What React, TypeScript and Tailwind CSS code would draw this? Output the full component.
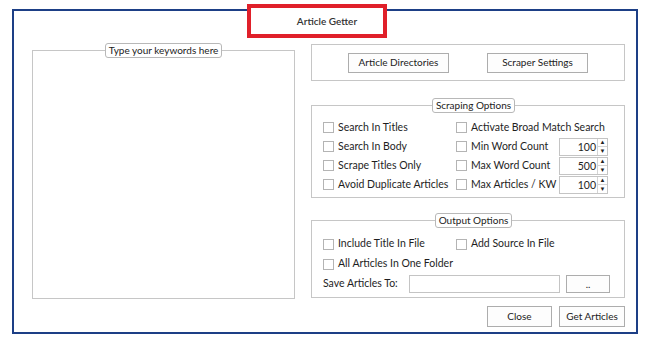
import React from 'react';

const Check = ({ label }: { label: string }) => (
    <label className="flex items-center gap-[4px] whitespace-nowrap">
        <span className="w-[11px] h-[11px] border border-[#b4b4b4] bg-white shrink-0" />
        <span>{label}</span>
    </label>
);

const Spin = ({ value }: { value: string }) => (
    <div className="flex h-[18px] w-[49px] border border-[#c4c4c4] bg-white">
        <span className="flex-1 text-right pr-[1px] leading-[16px]">{value}</span>
        <div className="flex flex-col w-[10px] border-l border-[#d4d4d4]">
            <span className="flex-1 flex items-center justify-center text-[6px] leading-none text-[#222]">▲</span>
            <span className="flex-1 flex items-center justify-center text-[6px] leading-none text-[#222] border-t border-[#d4d4d4]">▼</span>
        </div>
    </div>
);

const Legend = ({ children }: { children: React.ReactNode }) => (
    <legend className="mx-auto px-[3px] h-[15px] leading-[13px] text-[10px] border border-[#b8b8b8] rounded-[3px] bg-white text-[#222]">
        {children}
    </legend>
);

const Button = ({ children, className }: { children: React.ReactNode; className: string }) => (
    <button className={`border border-[#adadad] bg-[#fdfdfd] text-[#222] text-[10px] ${className}`}>{children}</button>
);

export default function App() {
    return (
        <div
            className="relative w-[650px] h-[347px] bg-white text-[#1e1e1e] text-[10.5px] pt-[9px] pl-[12px]"
            style={{ fontFamily: 'Lato, "Noto Sans", sans-serif' }}
        >
            {/* outer window frame */}
            <div className="w-[626px] h-[325px] border-2 border-[#1d3f86] flex gap-[16px] pl-[18px] pt-[33px]">
                {/* keywords */}
                <fieldset className="w-[263px] h-[256px] border border-[#c6c6c6] -mt-[1px]">
                    <Legend>Type your keywords here</Legend>
                </fieldset>

                <div className="w-[314px] flex flex-col">
                    {/* top buttons */}
                    <div className="h-[37px] border border-[#c6c6c6] flex items-center pl-[36px] gap-[38px]">
                        <Button className="w-[101px] h-[20px]">Article Directories</Button>
                        <Button className="w-[101px] h-[20px]">Scraper Settings</Button>
                    </div>

                    {/* scraping options */}
                    <fieldset className="mt-[17px] h-[100px] border border-[#c6c6c6] pl-[11px]">
                        <Legend>Scraping Options</Legend>
                        <div className="grid grid-cols-[133px_1fr] auto-rows-[19px] items-center pt-[5px]">
                            <Check label="Search In Titles" />
                            <Check label="Activate Broad Match Search" />
                            <Check label="Search In Body" />
                            <div className="flex items-center justify-between pr-[16px]">
                                <Check label="Min Word Count" />
                                <Spin value="100" />
                            </div>
                            <Check label="Scrape Titles Only" />
                            <div className="flex items-center justify-between pr-[16px]">
                                <Check label="Max Word Count" />
                                <Spin value="500" />
                            </div>
                            <Check label="Avoid Duplicate Articles" />
                            <div className="flex items-center justify-between pr-[16px]">
                                <Check label="Max Articles / KW" />
                                <Spin value="100" />
                            </div>
                        </div>
                    </fieldset>

                    {/* output options */}
                    <fieldset className="mt-[15px] h-[85px] border border-[#c6c6c6] pl-[11px]">
                        <Legend>Output Options</Legend>
                        <div className="grid grid-cols-[133px_1fr] auto-rows-[20px] items-center pt-[6px]">
                            <Check label="Include Title In File" />
                            <Check label="Add Source In File" />
                            <Check label="All Articles In One Folder" />
                            <div />
                        </div>
                        <div className="flex items-center h-[20px]">
                            <span className="w-[86px]">Save Articles To:</span>
                            <div className="w-[151px] h-[18px] border border-[#c4c4c4] bg-white" />
                            <Button className="ml-[6px] w-[44px] h-[18px] leading-none">..</Button>
                        </div>
                    </fieldset>

                    {/* bottom buttons */}
                    <div className="mt-[8px] flex justify-end gap-[7px]">
                        <Button className="w-[65px] h-[21px]">Close</Button>
                        <Button className="w-[66px] h-[21px]">Get Articles</Button>
                    </div>
                </div>
            </div>

            {/* red highlight annotation over the title bar */}
            <div className="absolute left-[247px] top-[4px] w-[140px] h-[34px] border-[4px] border-[#e0202a] bg-white flex items-center justify-center pl-[20px] text-[10px] font-semibold text-[#333]">
                Article Getter
            </div>
        </div>
    );
}
